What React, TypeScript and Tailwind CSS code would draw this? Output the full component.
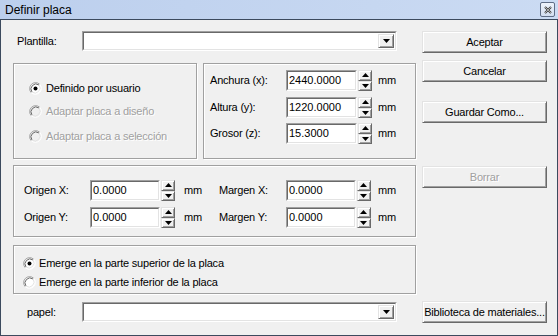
import React from "react";

const sunkenOuter = "border border-t-[#a0a0a0] border-l-[#a0a0a0] border-b-white border-r-white";
const sunkenInner = "border border-t-[#696969] border-l-[#696969] border-b-[#e3e3e3] border-r-[#e3e3e3]";
const raised =
  "border border-t-[#e3e3e3] border-l-[#e3e3e3] border-r-[#696969] border-b-[#696969] shadow-[inset_1px_1px_0_#fff,inset_-1px_-1px_0_#a0a0a0] bg-[#f0f0f0]";
const group = "border border-[#a0a0a0] shadow-[1px_1px_0_#fff,inset_1px_1px_0_#fff]";
const label = "tracking-[-0.2px] whitespace-nowrap";
const disabledText = "text-[#a0a0a0] [text-shadow:1px_1px_0_#fff]";

function Triangle({ up }: { up?: boolean }) {
  return (
    <svg width="7" height="4" viewBox="0 0 7 4">
      {up ? <polygon points="0,4 7,4 3.5,0" fill="#000" /> : <polygon points="0,0 7,0 3.5,4" fill="#000" />}
    </svg>
  );
}

function Radio({ checked, disabled }: { checked?: boolean; disabled?: boolean }) {
  return (
    <svg width="13" height="13" viewBox="0 0 13 13" className="shrink-0">
      <circle cx="6.5" cy="6.5" r="5.5" fill={disabled ? "#f0f0f0" : "#fff"} />
      <path d="M2.26 10.74 A6 6 0 0 1 10.74 2.26" fill="none" stroke="#a0a0a0" />
      <path d="M10.74 2.26 A6 6 0 0 1 2.26 10.74" fill="none" stroke="#fff" />
      <path d="M3 10 A5 5 0 0 1 10 3" fill="none" stroke="#696969" />
      <path d="M10 3 A5 5 0 0 1 3 10" fill="none" stroke="#e3e3e3" />
      {checked && <circle cx="6.5" cy="6.5" r="2" fill="#000" />}
    </svg>
  );
}

function Combo({ width }: { width: string }) {
  return (
    <div className={`${width} h-[20px] ${sunkenOuter}`}>
      <div className={`h-full ${sunkenInner} bg-white flex justify-end p-px`}>
        <div className={`w-[16px] h-full ${raised} flex items-center justify-center`}>
          <Triangle />
        </div>
      </div>
    </div>
  );
}

function Spin() {
  return (
    <div className="w-[14px] h-[21px] flex flex-col">
      <div className={`flex-1 ${raised} flex items-center justify-center`}>
        <Triangle up />
      </div>
      <div className={`flex-1 ${raised} flex items-center justify-center`}>
        <Triangle />
      </div>
    </div>
  );
}

function NumField({ value, width = "w-[71px]", mmGap = "ml-[6px]" }: { value: string; width?: string; mmGap?: string }) {
  return (
    <div className="flex items-center">
      <div className={`${width} h-[21px] ${sunkenOuter}`}>
        <div className={`h-full ${sunkenInner} bg-white flex items-center pl-[1px] text-[11px] leading-none`}>
          {value}
        </div>
      </div>
      <div className="ml-[1px]">
        <Spin />
      </div>
      <span className={`${mmGap} ${label}`}>mm</span>
    </div>
  );
}

function Button({ children, disabled, className = "" }: { children: React.ReactNode; disabled?: boolean; className?: string }) {
  return (
    <div className={`w-[125px] h-[22px] ${raised} flex items-center justify-center ${className}`}>
      <span className={`${label} ${disabled ? disabledText : ""}`}>{children}</span>
    </div>
  );
}

export default function App() {
  return (
    <div className="w-[558px] h-[336px] bg-[#f0f0f0] font-['Liberation_Sans',Arial,sans-serif] text-[11px] text-black flex flex-col overflow-hidden">
      {/* Title bar */}
      <div className="h-[19px] shrink-0 bg-gradient-to-r from-[#bccfed] to-[#cbdbf3] flex items-center pl-[5px] pr-[3px]">
        <span className="text-[12px] leading-none">Definir placa</span>
        <div className="ml-auto w-[15px] h-[15px] rounded-[2px] border border-[#5f6d86] bg-gradient-to-b from-[#eef3fb] to-[#d3def0] flex items-center justify-center">
          <svg width="8" height="8" viewBox="0 0 8 8">
            <path d="M1 1 L7 7 M7 1 L1 7" stroke="#3b3b3b" strokeWidth="2" />
            <path d="M1 1 L7 7 M7 1 L1 7" stroke="#f4f4f4" strokeWidth="0.6" />
          </svg>
        </div>
      </div>

      {/* Body */}
      <div className="flex-1 border border-[#3c4a5e] flex pt-[11px] pl-[12px]">
        {/* Left column */}
        <div className="w-[403px] flex flex-col">
          <div className="h-[20px] flex items-center">
            <span className={`w-[69px] pl-[4px] ${label}`}>Plantilla:</span>
            <Combo width="w-[315px]" />
          </div>

          <div className="mt-[12px] flex gap-[6px]">
            <div className={`w-[184px] h-[96px] ${group} flex flex-col pl-[15px] pt-[16px]`}>
              <div className="h-[16px] flex items-center gap-[4px]">
                <Radio checked />
                <span className={label}>Definido por usuario</span>
              </div>
              <div className="mt-[7px] h-[16px] flex items-center gap-[4px]">
                <Radio disabled />
                <span className={`${label} ${disabledText}`}>Adaptar placa a diseño</span>
              </div>
              <div className="mt-[9px] h-[16px] flex items-center gap-[4px]">
                <Radio disabled />
                <span className={`${label} ${disabledText}`}>Adaptar placa a selección</span>
              </div>
            </div>

            <div className={`w-[213px] h-[96px] ${group} flex flex-col pl-[6px] pt-[6px]`}>
              <div className="flex items-center">
                <span className={`w-[76px] ${label}`}>Anchura (x):</span>
                <NumField value="2440.0000" />
              </div>
              <div className="mt-[6px] flex items-center">
                <span className={`w-[76px] ${label}`}>Altura (y):</span>
                <NumField value="1220.0000" />
              </div>
              <div className="mt-[5px] flex items-center">
                <span className={`w-[76px] ${label}`}>Grosor (z):</span>
                <NumField value="15.3000" />
              </div>
            </div>
          </div>

          <div className={`mt-[6px] h-[72px] ${group} flex flex-col gap-[6px] pl-[10px] pt-[14px]`}>
            {[
              ["Origen X:", "Margen X:"],
              ["Origen Y:", "Margen Y:"],
            ].map(([o, m]) => (
              <div key={o} className="flex items-center">
                <span className={`w-[66px] ${label}`}>{o}</span>
                <NumField value="0.0000" width="w-[70px]" mmGap="ml-[9px]" />
                <span className={`ml-[17px] w-[67px] ${label}`}>{m}</span>
                <NumField value="0.0000" width="w-[70px]" mmGap="ml-[7px]" />
              </div>
            ))}
          </div>

          <div className={`mt-[8px] h-[49px] ${group} flex flex-col gap-[3px] pl-[9px] pt-[9px]`}>
            <div className="h-[16px] flex items-center gap-[3px]">
              <Radio checked />
              <span className={label}>Emerge en la parte superior de la placa</span>
            </div>
            <div className="h-[16px] flex items-center gap-[3px]">
              <Radio />
              <span className={label}>Emerge en la parte inferior de la placa</span>
            </div>
          </div>

          <div className="mt-[8px] h-[20px] flex items-center">
            <span className={`w-[69px] pl-[14px] ${label}`}>papel:</span>
            <Combo width="w-[315px]" />
          </div>
        </div>

        {/* Right column */}
        <div className="ml-[6px] flex flex-col">
          <Button>Aceptar</Button>
          <Button className="mt-[7px]">Cancelar</Button>
          <Button className="mt-[19px]">Guardar Como...</Button>
          <Button className="mt-[43px]" disabled>
            Borrar
          </Button>
          <Button className="mt-[113px]">Biblioteca de materiales...</Button>
        </div>
      </div>
    </div>
  );
}
